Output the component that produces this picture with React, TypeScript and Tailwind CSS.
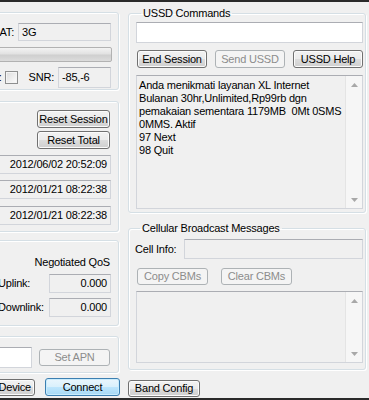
import type { ReactNode } from "react";

function Btn({
  children,
  className = "",
  kind = "normal",
}: {
  children: ReactNode;
  className?: string;
  kind?: "normal" | "disabled" | "primary";
}) {
  const look =
    kind === "disabled"
      ? "border-[#adb2b5] bg-[#f4f4f4] text-[#8c8c8c]"
      : kind === "primary"
        ? "border-[#3c7fb1] bg-[linear-gradient(to_bottom,#eaf6fd,#d9f0fc_50%,#bee6fd_50%,#a7d9f5)] shadow-[inset_0_0_0_1px_#c9ecfd] text-black"
        : "border-[#707070] bg-[linear-gradient(to_bottom,#f2f2f2,#ebebeb_50%,#dddddd_50%,#cfcfcf)] shadow-[inset_0_0_0_1px_#fbfbfb] text-black";
  return (
    <div
      className={`shrink-0 flex items-center justify-center rounded-[3px] border text-[11px] leading-none whitespace-nowrap ${look} ${className}`}
    >
      {children}
    </div>
  );
}

function Field({
  children,
  className = "",
}: {
  children?: ReactNode;
  className?: string;
}) {
  return (
    <div
      className={`shrink-0 flex items-center border border-[#d2d5db] border-t-[#abadb3] px-[3px] text-[11px] leading-none whitespace-nowrap ${className}`}
    >
      {children}
    </div>
  );
}

function Arrow({ up }: { up?: boolean }) {
  return (
    <div className="h-[17px] flex items-center justify-center">
      <svg width="7" height="4" viewBox="0 0 7 4">
        <path d={up ? "M0 4 L3.5 0 L7 4 Z" : "M0 0 L3.5 4 L7 0 Z"} fill="#a8a8a8" />
      </svg>
    </div>
  );
}

function TextBox({ lines, className = "" }: { lines: string[]; className?: string }) {
  return (
    <div className={`flex border border-[#d2d5db] border-t-[#abadb3] bg-[#f0f0f0] ${className}`}>
      <div className="flex-1 pl-[2px] pt-[3px] text-[11px] leading-[13px] whitespace-pre">
        {lines.map((l, i) => (
          <div key={i}>{l}</div>
        ))}
      </div>
      <div className="w-[17px] flex flex-col justify-between bg-[#f6f6f6] border-l border-[#e4e4e4]">
        <Arrow up />
        <Arrow />
      </div>
    </div>
  );
}

const ussdText = [
  "Anda menikmati layanan XL Internet",
  "Bulanan 30hr,Unlimited,Rp99rb dgn",
  "pemakaian sementara 1179MB  0Mt 0SMS",
  "0MMS. Aktif",
  "97 Next",
  "98 Quit",
];

const group = "border border-[#d5dfe5] rounded-[3px] shadow-[inset_1px_1px_0_#ffffff,1px_1px_0_#ffffff]";

export default function App() {
  return (
    <div className="w-[369px] h-[400px] overflow-hidden bg-[#f0f0f0] border-t-2 border-b-2 border-[#2a2a2a] flex font-['Liberation_Sans',Arial,sans-serif] text-black tracking-[-0.2px]">
      {/* left column, cut off by the window edge */}
      <div className="-ml-[80px] w-[201px] shrink-0 flex flex-col">
        {/* signal group */}
        <div className={`mt-[10px] mr-[2px] h-[78px] pt-[10px] pr-[7px] flex flex-col items-end ${group}`}>
          <div className="flex items-center gap-[4px]">
            <span className="text-[11px]">RAT:</span>
            <Field className="w-[93px] h-[18px]">3G</Field>
          </div>
          <div className="mt-[6px] -mr-[1px] w-[190px] h-[15px] rounded-[2px] border border-[#b2b2b2] bg-[linear-gradient(to_bottom,#f3f3f3,#e2e2e2_45%,#cfcfcf_55%,#dcdcdc)]" />
          <div className="mt-[5px] flex items-center">
            <span className="text-[11px]">Roaming:</span>
            <div className="ml-[3px] w-[13px] h-[13px] border border-[#8e8f8f] bg-[linear-gradient(135deg,#dcdcdc,#fdfdfd)] shadow-[inset_0_0_0_1px_#f4f4f4]" />
            <span className="ml-[11px] text-[11px]">SNR:</span>
            <Field className="ml-[4px] w-[53px] h-[21px]">-85,-6</Field>
          </div>
        </div>

        {/* session group */}
        <div className={`mt-[11px] mr-[2px] h-[131px] pt-[8px] pr-[7px] flex flex-col items-end ${group}`}>
          <Btn className="mr-[1px] w-[73px] h-[18px]">Reset Session</Btn>
          <Btn className="mt-[3px] mr-[1px] w-[73px] h-[18px]">Reset Total</Btn>
          <Field className="mt-[6px] w-[130px] h-[19px] justify-end">2012/06/02 20:52:09</Field>
          <Field className="mt-[6px] w-[130px] h-[19px] justify-end">2012/01/21 08:22:38</Field>
          <Field className="mt-[7px] w-[130px] h-[19px] justify-end">2012/01/21 08:22:38</Field>
        </div>

        {/* QoS group */}
        <div className={`mt-[8px] mr-[2px] h-[86px] pt-[15px] pr-[7px] flex flex-col items-end ${group}`}>
          <span className="mr-[1px] text-[11px] leading-[13px]">Negotiated QoS</span>
          <div className="mt-[5px] flex items-center">
            <span className="w-[51px] text-[11px]">Uplink:</span>
            <Field className="w-[62px] h-[19px] justify-end">0.000</Field>
          </div>
          <div className="mt-[5px] flex items-center">
            <span className="w-[51px] text-[11px]">Downlink:</span>
            <Field className="w-[62px] h-[19px] justify-end">0.000</Field>
          </div>
        </div>

        {/* APN group */}
        <div className={`mt-[10px] mr-[2px] h-[37px] pt-[5px] pr-[7px] flex items-center justify-end ${group}`}>
          <Field className="w-[60px] h-[21px] bg-white" />
          <Btn kind="disabled" className="ml-[7px] mr-[1px] w-[71px] h-[17px]">
            Set APN
          </Btn>
        </div>

        <div className="mt-[5px] flex justify-end items-center">
          <Btn className="w-[70px] h-[17px] !justify-end pr-[3px]">Scan Device</Btn>
          <Btn kind="primary" className="ml-[10px] w-[75px] h-[18px] mr-[1px]">
            Connect
          </Btn>
        </div>
      </div>

      {/* right column */}
      <div className="flex-1 pl-[7px] pr-[3px] flex flex-col">
        <fieldset className={`mt-[5px] pl-[7px] pr-[2px] pb-[3px] ${group}`}>
          <legend className="ml-[5px] px-[2px] text-[11px] leading-[13px]">USSD Commands</legend>
          <div className="mt-[2px] h-[21px] border border-[#d2d5db] border-t-[#abadb3] bg-white" />
          <div className="mt-[7px] ml-[1px] flex gap-[8px]">
            <Btn className="w-[70px] h-[18px]">End Session</Btn>
            <Btn kind="disabled" className="w-[70px] h-[18px]">
              Send USSD
            </Btn>
            <Btn className="w-[70px] h-[18px]">USSD Help</Btn>
          </div>
          <TextBox lines={ussdText} className="mt-[7px] h-[134px]" />
        </fieldset>

        <fieldset className={`mt-[9px] pl-[7px] pr-[2px] pb-[6px] ${group}`}>
          <legend className="ml-[4px] px-[2px] text-[11px] leading-[13px]">Cellular Broadcast Messages</legend>
          <div className="mt-[4px] flex items-center justify-between">
            <span className="-ml-[1px] text-[11px]">Cell Info:</span>
            <Field className="w-[179px] h-[20px]" />
          </div>
          <div className="mt-[9px] ml-[1px] flex gap-[13px]">
            <Btn kind="disabled" className="w-[71px] h-[17px]">
              Copy CBMs
            </Btn>
            <Btn kind="disabled" className="w-[71px] h-[17px]">
              Clear CBMs
            </Btn>
          </div>
          <TextBox lines={[]} className="mt-[6px] h-[72px]" />
        </fieldset>

        <div className="mt-[10px] flex">
          <Btn className="w-[72px] h-[17px]">Band Config</Btn>
        </div>
      </div>
    </div>
  );
}
